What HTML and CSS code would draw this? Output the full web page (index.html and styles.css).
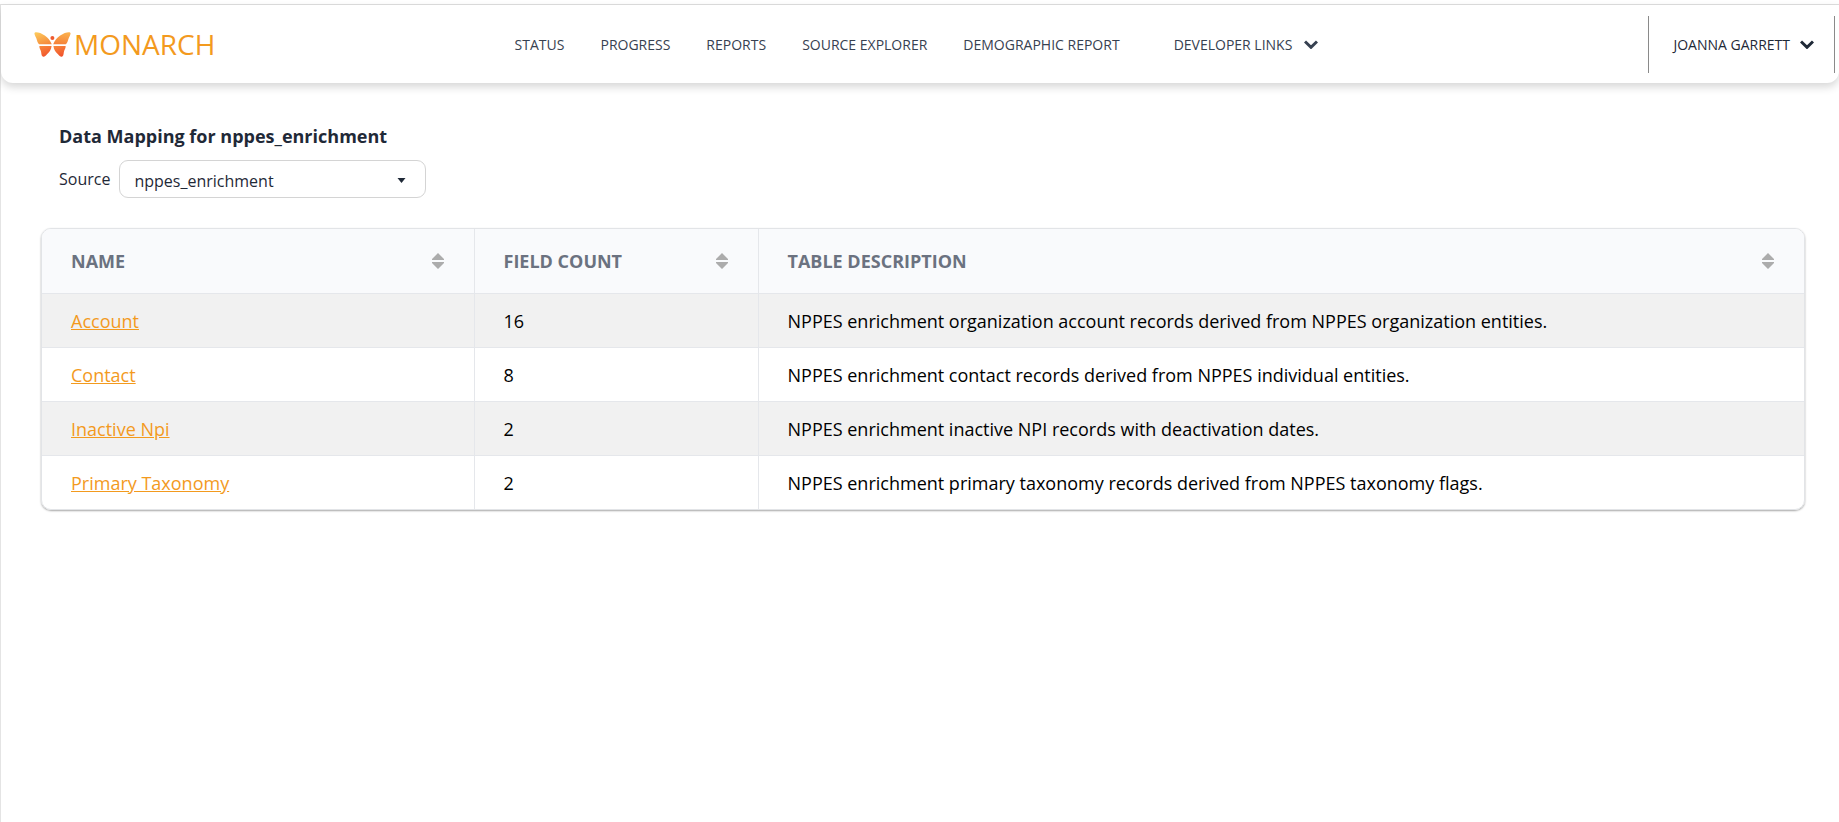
FILE: index.html
```html
<!DOCTYPE html>
<html lang="en">
<head>
<meta charset="utf-8">
<meta name="viewport" content="width=device-width, initial-scale=1">
<title>Monarch</title>
<link rel="stylesheet" href="styles.css">
</head>
<body>
<div class="page">
  <header class="topbar">
    <a class="brand" href="#">
      <svg class="brand-mark" viewBox="0 0 37 25" aria-hidden="true">
        <defs>
          <linearGradient id="wing-left" x1="0.1" y1="0" x2="0.7" y2="1">
            <stop offset="0" stop-color="#fdcb5c"/>
            <stop offset="1" stop-color="#f58a3c"/>
          </linearGradient>
          <linearGradient id="wing-right" x1="0.6" y1="0" x2="0.4" y2="1">
            <stop offset="0" stop-color="#fbb04c"/>
            <stop offset="1" stop-color="#f5823a"/>
          </linearGradient>
          <linearGradient id="wing-low" x1="0.3" y1="0" x2="0.7" y2="1">
            <stop offset="0" stop-color="#f7843a"/>
            <stop offset="1" stop-color="#f0502c"/>
          </linearGradient>
        </defs>
        <path fill="url(#wing-left)" d="M1 0.4C5.500 -0.500 15 4.500 17.800 12.300H6C3.800 12.300 3.300 9 2.400 6.500C1.600 4.300 -0.600 1.200 1 0.400Z"/>
        <path fill="url(#wing-right)" d="M36 0.4C31.500 -0.500 22 4.500 19.200 12.300H31C33.200 12.300 33.700 9 34.600 6.500C35.400 4.300 37.600 1.200 36 0.400Z"/>
        <path fill="url(#wing-low)" d="M5.400 14H17.600C17.200 18 15 20.500 13 22.300C11.500 24.200 10 25.300 8.700 24.500C7 23.400 7.600 21 6.800 18.800C6.200 17.200 5.200 16 5.400 14Z"/>
        <path fill="url(#wing-low)" d="M31.600 14H19.400C19.800 18 22 20.500 24 22.300C25.500 24.200 27 25.300 28.300 24.500C30 23.400 29.400 21 30.200 18.800C30.800 17.200 31.800 16 31.600 14Z"/>
        <circle cx="18.400" cy="6" r="2" fill="#ef5a30"/>
      </svg>
      <span class="brand-name">MONARCH</span>
    </a>
    <nav class="nav">
      <a class="nav-link" href="#">STATUS</a>
      <a class="nav-link" href="#">PROGRESS</a>
      <a class="nav-link" href="#">REPORTS</a>
      <a class="nav-link" href="#">SOURCE EXPLORER</a>
      <a class="nav-link" href="#">DEMOGRAPHIC REPORT</a>
      <button class="menu-button nav-menu" type="button">DEVELOPER LINKS
        <svg class="chevron" viewBox="0 0 14 9" aria-hidden="true"><path d="M1 1.500L7 7.300L13 1.500"/></svg>
      </button>
    </nav>
    <div class="account">
      <button class="menu-button account-button" type="button">JOANNA GARRETT
        <svg class="chevron" viewBox="0 0 14 9" aria-hidden="true"><path d="M1 1.500L7 7.300L13 1.500"/></svg>
      </button>
    </div>
  </header>
  <main class="content">
    <section class="filter">
      <h1 class="title">Data Mapping for nppes_enrichment</h1>
      <div class="field">
        <label class="field-label" for="source">Source</label>
        <div class="select-box">
          <select class="select" id="source"><option>nppes_enrichment</option></select>
          <svg class="caret" viewBox="0 0 8 5" aria-hidden="true"><path d="M0 0H8L4 5Z"/></svg>
        </div>
      </div>
    </section>
    <div class="table-card">
      <table class="table">
        <colgroup><col class="col-name"><col class="col-count"><col></colgroup>
        <thead>
          <tr>
            <th scope="col"><div class="head-cell">NAME<button class="sort" type="button" aria-label="Sort by name"><svg class="sort-icon" viewBox="0 0 12 16" aria-hidden="true"><path d="M6 0L12 6V7H0V6Z M0 9H12V10L6 16L0 10Z"/></svg></button></div></th>
            <th scope="col"><div class="head-cell">FIELD COUNT<button class="sort" type="button" aria-label="Sort by field count"><svg class="sort-icon" viewBox="0 0 12 16" aria-hidden="true"><path d="M6 0L12 6V7H0V6Z M0 9H12V10L6 16L0 10Z"/></svg></button></div></th>
            <th scope="col"><div class="head-cell">TABLE DESCRIPTION<button class="sort" type="button" aria-label="Sort by description"><svg class="sort-icon" viewBox="0 0 12 16" aria-hidden="true"><path d="M6 0L12 6V7H0V6Z M0 9H12V10L6 16L0 10Z"/></svg></button></div></th>
          </tr>
        </thead>
        <tbody>
          <tr><td><a class="link" href="#">Account</a></td><td>16</td><td>NPPES enrichment organization account records derived from NPPES organization entities.</td></tr>
          <tr><td><a class="link" href="#">Contact</a></td><td>8</td><td>NPPES enrichment contact records derived from NPPES individual entities.</td></tr>
          <tr><td><a class="link" href="#">Inactive Npi</a></td><td>2</td><td>NPPES enrichment inactive NPI records with deactivation dates.</td></tr>
          <tr><td><a class="link" href="#">Primary Taxonomy</a></td><td>2</td><td>NPPES enrichment primary taxonomy records derived from NPPES taxonomy flags.</td></tr>
        </tbody>
      </table>
    </div>
  </main>
</div>
</body>
</html>
```
FILE: styles.css
```css
* {
  box-sizing: border-box;
}

body {
  margin: 0;
  padding-top: 4px;
  background: #fff;
  color: #1f2937;
  font-family: "Segoe UI", "Open Sans", "Noto Sans", sans-serif;
  font-size: 16px;
}

button,
select {
  font: inherit;
  color: inherit;
}

.page {
  min-height: calc(100vh - 4px);
  border-top: 1px solid #dfdfdf;
  border-left: 1px solid #e4e4e4;
}

.topbar {
  display: grid;
  grid-template-columns: 1fr auto 1fr;
  align-items: center;
  height: 78px;
  padding: 0 4px 0 33px;
  border-radius: 0 0 12px 12px;
  background: #fff;
  box-shadow: 0 4px 8px rgba(0, 0, 0, 0.16);
}

.brand {
  display: flex;
  align-items: center;
  gap: 3px;
  color: #f39a1e;
  text-decoration: none;
}

.brand-mark {
  width: 37px;
  height: 25px;
}

.brand-name {
  font-size: 28px;
  line-height: 40px;
}

.nav {
  display: flex;
  align-items: center;
  gap: 36px;
  margin-right: 36px;
  color: #374151;
  font-size: 14px;
}

.nav-link {
  color: inherit;
  text-decoration: none;
}

.menu-button {
  display: flex;
  align-items: center;
  gap: 12px;
  padding: 0;
  border: 0;
  background: none;
  cursor: pointer;
  white-space: nowrap;
}

.nav-menu {
  margin-left: 18px;
}

.chevron {
  width: 14px;
  height: 9px;
  fill: none;
  stroke: currentColor;
  stroke-width: 3px;
}

.account {
  justify-self: end;
  display: flex;
  height: 57px;
  padding: 0 20px 0 24px;
  border-left: 1px solid #8a8a8a;
  border-right: 1px solid #8a8a8a;
  font-size: 14px;
}

.account-button {
  gap: 10px;
}

.content {
  padding: 38px 34px 0 40px;
}

.filter {
  padding-left: 18px;
}

.title {
  margin: 0 0 8px;
  font-size: 18px;
  line-height: 31px;
  font-weight: 700;
}

.field {
  display: flex;
  align-items: center;
  gap: 9px;
}

.select-box {
  position: relative;
  width: 307px;
}

.select {
  width: 100%;
  height: 38px;
  padding: 3px 40px 0 14px;
  appearance: none;
  border: 1px solid #d4d4d4;
  border-radius: 9px;
  background: #fff;
}

.caret {
  position: absolute;
  top: 18px;
  right: 20px;
  width: 9px;
  height: 5px;
  fill: #1f2937;
  pointer-events: none;
}

.table-card {
  margin-top: 30px;
  overflow: hidden;
  border: 1px solid #e2e4e7;
  border-radius: 10px;
  box-shadow: 0 1px 2px rgba(0, 0, 0, 0.35);
}

.table {
  width: 100%;
  border-collapse: collapse;
  table-layout: fixed;
  color: #000;
  font-size: 18px;
}

.col-name {
  width: 432px;
}

.col-count {
  width: 284px;
}

.table th,
.table td {
  padding: 1px 30px 0 29px;
  border: 0 solid #e5e7eb;
  text-align: left;
}

.table th {
  height: 64px;
  background: #f9fafc;
  color: #6b7280;
  font-weight: 700;
}

.table td {
  height: 54px;
  border-top-width: 1px;
}

.table th + th,
.table td + td {
  border-left-width: 1px;
}

.table tbody tr:nth-child(odd) {
  background: #f1f1f1;
}

.head-cell {
  display: flex;
  align-items: center;
  justify-content: space-between;
}

.sort {
  display: flex;
  padding: 0;
  border: 0;
  background: none;
  cursor: pointer;
}

.sort-icon {
  width: 12px;
  height: 16px;
  fill: #acacac;
}

.link {
  color: #f39a1e;
  text-decoration: underline;
}
```
